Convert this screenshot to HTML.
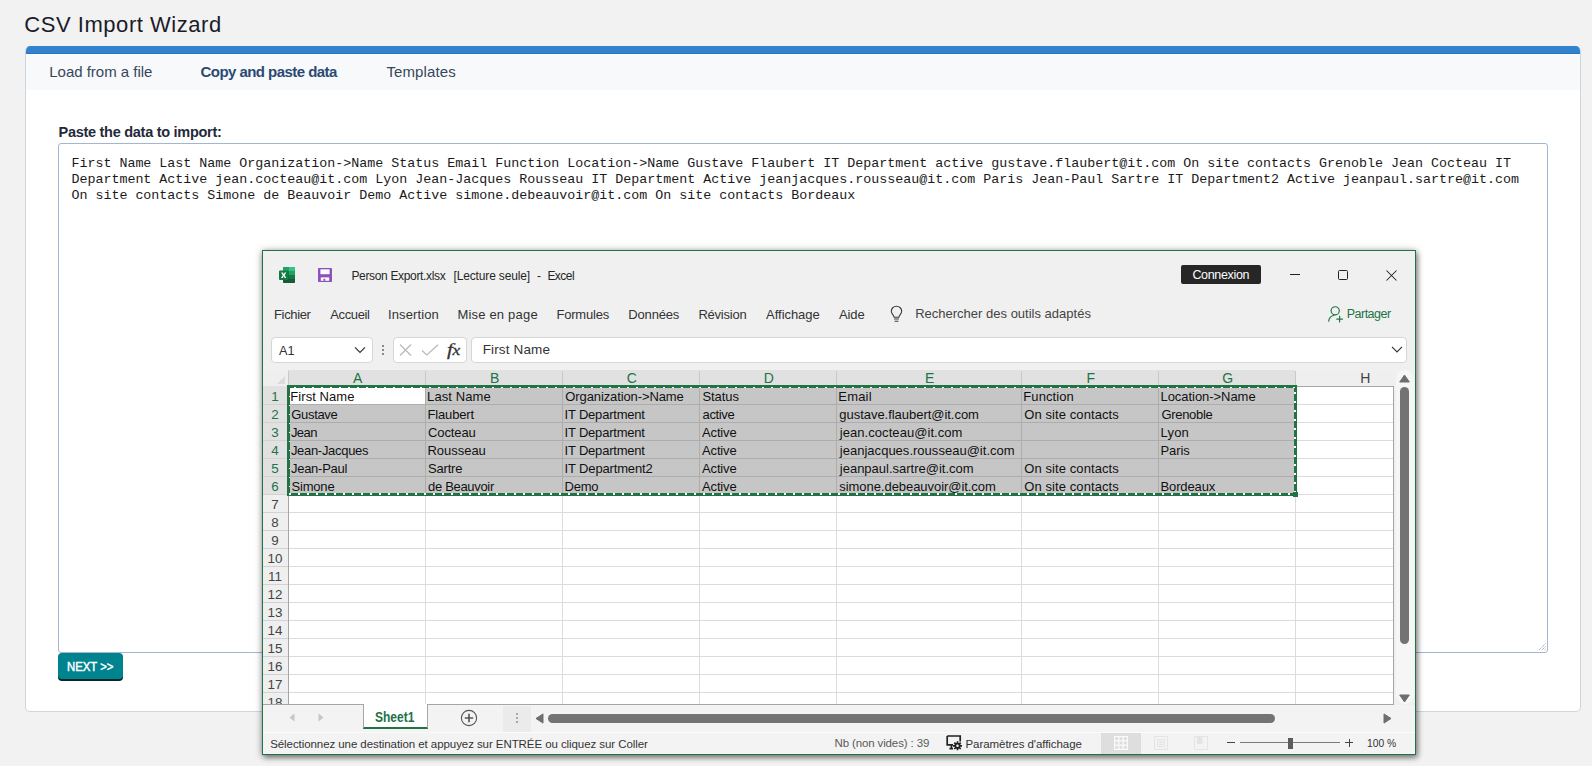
<!DOCTYPE html>
<html><head><meta charset="utf-8"><title>CSV Import Wizard</title>
<style>
*{box-sizing:border-box;margin:0;padding:0}
html,body{width:1592px;height:766px;overflow:hidden;background:#f2f2f2;font-family:"Liberation Sans",sans-serif;}
.a{position:absolute}
.tx{position:absolute;white-space:pre;z-index:5}
.bl{display:inline-block;width:0;height:0;vertical-align:baseline}
#panel{position:absolute;left:25px;top:46px;width:1556px;height:666px;background:#fff;border:1px solid #cdd5df;border-top:none;border-radius:5px;overflow:hidden}
#bluebar{position:absolute;left:0;top:0;width:100%;height:8px;background:#3282ce;border-bottom:1px solid #2475c6}
#tabs{position:absolute;left:0;top:9px;width:100%;height:35px;background:#f8f9fb}
#ta{position:absolute;left:58px;top:143px;width:1490px;height:510px;border:1px solid #a3b6d0;border-radius:3px;background:#fff}
#tatext{position:absolute;left:12.4px;top:12px;font-family:"Liberation Mono",monospace;font-size:13.333px;line-height:16px;color:#1a1a1a;white-space:pre}
#next{position:absolute;left:58px;top:653px;width:65px;height:26px;background:#00838f;border-radius:4px;box-shadow:0 2px 0 #01292d}
#xl{position:absolute;left:262px;top:250px;width:1154px;height:505px;background:#f0f0f0;border:1px solid #217346;box-shadow:0 1px 7px rgba(0,0,0,.42), 2px 3px 5px rgba(0,0,0,.3);z-index:2}
.box{position:absolute;background:#fff;border:1px solid #d6d6d6;border-radius:4px}
.ch{position:absolute;top:370px;height:16px;text-align:center;font-size:14px;line-height:17px;z-index:5}
.rh{position:absolute;left:262.5px;width:25px;height:18px;text-align:center;font-size:13.4px;line-height:21px;z-index:5}
</style></head><body>
<div id="panel"><div id="bluebar"></div><div id="tabs"></div></div>
<div id="ta"><div id="tatext">First Name Last Name Organization-&gt;Name Status Email Function Location-&gt;Name Gustave Flaubert IT Department active gustave.flaubert@it.com On site contacts Grenoble Jean Cocteau IT
Department Active jean.cocteau@it.com Lyon Jean-Jacques Rousseau IT Department Active jeanjacques.rousseau@it.com Paris Jean-Paul Sartre IT Department2 Active jeanpaul.sartre@it.com
On site contacts Simone de Beauvoir Demo Active simone.debeauvoir@it.com On site contacts Bordeaux</div>
<svg class="a" style="right:1px;bottom:1px" width="9" height="9" viewBox="0 0 9 9"><path d="M8.5 1.5 L1.5 8.5 M8.5 4.5 L4.5 8.5 M8.5 7 L7 8.5" stroke="#a0a0a0" stroke-width="1" stroke-dasharray="1.2 0.8" fill="none"/></svg>
</div>
<div id="next"></div>
<div id="xl"></div>

<svg class="a" style="left:279px;top:267px;z-index:4" width="16" height="16" viewBox="0 0 16 16">
<path d="M5 0 H15 a1 1 0 0 1 1 1 V15 a1 1 0 0 1 -1 1 H5 a1 1 0 0 1 -1 -1 V1 a1 1 0 0 1 1 -1 Z" fill="#21a366"/>
<rect x="10" y="0" width="6" height="4" fill="#33c481"/><rect x="4" y="0" width="6" height="4" fill="#21a366"/>
<rect x="4" y="4" width="6" height="4" fill="#107c41"/><rect x="10" y="4" width="6" height="4" fill="#21a366"/>
<rect x="10" y="8" width="6" height="4" fill="#107c41"/><rect x="4" y="8" width="6" height="4" fill="#185c37"/>
<path d="M4 12 H16 V15 a1 1 0 0 1 -1 1 H5 a1 1 0 0 1 -1 -1 Z" fill="#185c37"/>
<rect x="0" y="3.5" width="9.4" height="9.4" rx="0.9" fill="#107c41"/>
<path d="M2.1 5.6 H3.8 L4.75 7.35 L5.7 5.6 H7.3 L5.6 8.2 L7.4 10.9 H5.7 L4.7 9.1 L3.7 10.9 H2.0 L3.8 8.2 Z" fill="#fff"/>
</svg>
<svg class="a" style="left:318px;top:268px;z-index:4" width="14" height="14" viewBox="0 0 14 14">
<rect x="0" y="0" width="14" height="14" rx="0.8" fill="#8c52b9"/>
<rect x="2.4" y="1.3" width="9.2" height="4.9" fill="#fdfcfe"/>
<rect x="2.8" y="9.4" width="8.4" height="3.4" fill="#fdfcfe"/>
<rect x="5.4" y="10.8" width="1.9" height="2.0" fill="#8c52b9"/>
</svg>
<div class="a" style="left:1181px;top:265px;width:80px;height:19px;background:#262626;border-radius:2px;z-index:3;"></div>
<div class="a" style="left:1290px;top:274px;width:10px;height:1px;background:#222;z-index:3;"></div>
<div class="a" style="left:1338px;top:270px;width:10px;height:10px;border:1px solid #222;border-radius:1.5px;z-index:3;"></div>
<svg class="a" style="left:1386px;top:270px;z-index:4" width="11" height="11" viewBox="0 0 11 11"><path d="M0.5 0.5 L10.5 10.5 M10.5 0.5 L0.5 10.5" stroke="#222" stroke-width="1.05" fill="none"/></svg>
<svg class="a" style="left:890px;top:305px;z-index:4" width="13" height="18" viewBox="0 0 13 18"><path d="M6.5 1.3 C3.4 1.3 1.3 3.5 1.3 6.2 C1.3 8 2.3 9 3.3 10.3 C3.9 11.1 4.1 11.6 4.1 12.2 H8.9 C8.9 11.6 9.1 11.1 9.7 10.3 C10.7 9 11.7 8 11.7 6.2 C11.7 3.5 9.6 1.3 6.5 1.3 Z" fill="none" stroke="#3a3a3a" stroke-width="1.1"/><path d="M4.1 14 H8.9 M4.6 16.3 H8.4" stroke="#3a3a3a" stroke-width="1.1"/></svg>
<svg class="a" style="left:1327px;top:305px;z-index:4" width="17" height="18" viewBox="0 0 17 18"><circle cx="8.2" cy="5.8" r="4.1" fill="none" stroke="#217346" stroke-width="1.15"/><path d="M1.6 16.6 C2 12.6 4.6 10.5 7.6 10.2" fill="none" stroke="#217346" stroke-width="1.15"/><path d="M12.6 10.8 V17.4 M9.3 14.1 H15.9" stroke="#217346" stroke-width="1.15"/></svg>
<div class="box" style="left:271px;top:337px;width:102px;height:26px;z-index:3"></div>
<svg class="a" style="left:354px;top:346px;z-index:4" width="12" height="8" viewBox="0 0 12 8"><path d="M1 1.3 L6 6.3 L11 1.3" fill="none" stroke="#333" stroke-width="1.2"/></svg>
<div class="a" style="left:382px;top:345px;width:2px;height:2px;background:#8a8a8a;z-index:3;"></div>
<div class="a" style="left:382px;top:349px;width:2px;height:2px;background:#8a8a8a;z-index:3;"></div>
<div class="a" style="left:382px;top:353px;width:2px;height:2px;background:#8a8a8a;z-index:3;"></div>
<div class="box" style="left:393px;top:337px;width:74px;height:26px;z-index:3"></div>
<svg class="a" style="left:399px;top:344px;z-index:4" width="13" height="12" viewBox="0 0 13 12"><path d="M1 0.5 L12 11.5 M12 0.5 L1 11.5" stroke="#b8b8b8" stroke-width="1.15" fill="none"/></svg>
<svg class="a" style="left:421px;top:344px;z-index:4" width="18" height="12" viewBox="0 0 18 12"><path d="M1 6.5 L5.8 11 L17 0.8" stroke="#b8b8b8" stroke-width="1.15" fill="none"/></svg>
<div class="tx" style="left:446.5px;top:338px;font-family:'Liberation Serif',serif;font-style:italic;font-size:17.5px;line-height:22px;color:#333;-webkit-text-stroke:0.3px #333;letter-spacing:-0.2px;z-index:5;transform-origin:0 0;transform:scaleX(1.2)">f<span style="font-size:14.5px">x</span></div>
<div class="box" style="left:471px;top:337px;width:936px;height:26px;z-index:3"></div>
<svg class="a" style="left:1391px;top:346px;z-index:4" width="12" height="7" viewBox="0 0 12 7"><path d="M1 0.9 L6 5.9 L11 0.9" fill="none" stroke="#333" stroke-width="1.2"/></svg>
<div class="a" style="left:263px;top:370px;width:1130px;height:334px;background:#fff;z-index:3;"></div>
<div class="a" style="left:263px;top:370px;width:1131px;height:16px;background:#efefef;z-index:3;"></div>
<div class="a" style="left:263px;top:386px;width:25px;height:318px;background:#efefef;z-index:3;"></div>
<div class="a" style="left:288px;top:370px;width:1007px;height:16px;background:#e1e1e1;z-index:3;"></div>
<div class="a" style="left:263px;top:386px;width:25px;height:108px;background:#e1e1e1;z-index:3;"></div>
<svg class="a" style="left:277px;top:376px;z-index:4" width="8" height="8" viewBox="0 0 8 8"><path d="M8 0 V8 H0 Z" fill="#dcdcdc"/></svg>
<div class="a" style="left:1295px;top:386px;width:98px;height:1px;background:#a6a6a6;z-index:3;"></div>
<div class="a" style="left:288px;top:494px;width:1px;height:210px;background:#a6a6a6;z-index:3;"></div>
<div class="a" style="left:288px;top:386px;width:1007px;height:108px;background:#c6c6c6;z-index:3;"></div>
<div class="a" style="left:290px;top:388px;width:135px;height:16px;background:#fff;z-index:3;"></div>
<div class="a" style="left:289px;top:404px;width:1104px;height:1px;background:#dcdcdc;z-index:3;"></div>
<div class="a" style="left:263px;top:404px;width:25px;height:1px;background:#d2d2d2;z-index:3;"></div>
<div class="a" style="left:289px;top:404px;width:1006px;height:1px;background:#adadad;z-index:3;"></div>
<div class="a" style="left:289px;top:422px;width:1104px;height:1px;background:#dcdcdc;z-index:3;"></div>
<div class="a" style="left:263px;top:422px;width:25px;height:1px;background:#d2d2d2;z-index:3;"></div>
<div class="a" style="left:289px;top:422px;width:1006px;height:1px;background:#adadad;z-index:3;"></div>
<div class="a" style="left:289px;top:440px;width:1104px;height:1px;background:#dcdcdc;z-index:3;"></div>
<div class="a" style="left:263px;top:440px;width:25px;height:1px;background:#d2d2d2;z-index:3;"></div>
<div class="a" style="left:289px;top:440px;width:1006px;height:1px;background:#adadad;z-index:3;"></div>
<div class="a" style="left:289px;top:458px;width:1104px;height:1px;background:#dcdcdc;z-index:3;"></div>
<div class="a" style="left:263px;top:458px;width:25px;height:1px;background:#d2d2d2;z-index:3;"></div>
<div class="a" style="left:289px;top:458px;width:1006px;height:1px;background:#adadad;z-index:3;"></div>
<div class="a" style="left:289px;top:476px;width:1104px;height:1px;background:#dcdcdc;z-index:3;"></div>
<div class="a" style="left:263px;top:476px;width:25px;height:1px;background:#d2d2d2;z-index:3;"></div>
<div class="a" style="left:289px;top:476px;width:1006px;height:1px;background:#adadad;z-index:3;"></div>
<div class="a" style="left:289px;top:494px;width:1104px;height:1px;background:#dcdcdc;z-index:3;"></div>
<div class="a" style="left:263px;top:494px;width:25px;height:1px;background:#d2d2d2;z-index:3;"></div>
<div class="a" style="left:289px;top:512px;width:1104px;height:1px;background:#dcdcdc;z-index:3;"></div>
<div class="a" style="left:263px;top:512px;width:25px;height:1px;background:#d2d2d2;z-index:3;"></div>
<div class="a" style="left:289px;top:530px;width:1104px;height:1px;background:#dcdcdc;z-index:3;"></div>
<div class="a" style="left:263px;top:530px;width:25px;height:1px;background:#d2d2d2;z-index:3;"></div>
<div class="a" style="left:289px;top:548px;width:1104px;height:1px;background:#dcdcdc;z-index:3;"></div>
<div class="a" style="left:263px;top:548px;width:25px;height:1px;background:#d2d2d2;z-index:3;"></div>
<div class="a" style="left:289px;top:566px;width:1104px;height:1px;background:#dcdcdc;z-index:3;"></div>
<div class="a" style="left:263px;top:566px;width:25px;height:1px;background:#d2d2d2;z-index:3;"></div>
<div class="a" style="left:289px;top:584px;width:1104px;height:1px;background:#dcdcdc;z-index:3;"></div>
<div class="a" style="left:263px;top:584px;width:25px;height:1px;background:#d2d2d2;z-index:3;"></div>
<div class="a" style="left:289px;top:602px;width:1104px;height:1px;background:#dcdcdc;z-index:3;"></div>
<div class="a" style="left:263px;top:602px;width:25px;height:1px;background:#d2d2d2;z-index:3;"></div>
<div class="a" style="left:289px;top:620px;width:1104px;height:1px;background:#dcdcdc;z-index:3;"></div>
<div class="a" style="left:263px;top:620px;width:25px;height:1px;background:#d2d2d2;z-index:3;"></div>
<div class="a" style="left:289px;top:638px;width:1104px;height:1px;background:#dcdcdc;z-index:3;"></div>
<div class="a" style="left:263px;top:638px;width:25px;height:1px;background:#d2d2d2;z-index:3;"></div>
<div class="a" style="left:289px;top:656px;width:1104px;height:1px;background:#dcdcdc;z-index:3;"></div>
<div class="a" style="left:263px;top:656px;width:25px;height:1px;background:#d2d2d2;z-index:3;"></div>
<div class="a" style="left:289px;top:674px;width:1104px;height:1px;background:#dcdcdc;z-index:3;"></div>
<div class="a" style="left:263px;top:674px;width:25px;height:1px;background:#d2d2d2;z-index:3;"></div>
<div class="a" style="left:289px;top:692px;width:1104px;height:1px;background:#dcdcdc;z-index:3;"></div>
<div class="a" style="left:263px;top:692px;width:25px;height:1px;background:#d2d2d2;z-index:3;"></div>
<div class="a" style="left:425px;top:386px;width:1px;height:318px;background:#dcdcdc;z-index:3;"></div>
<div class="a" style="left:425px;top:386px;width:1px;height:108px;background:#adadad;z-index:3;"></div>
<div class="a" style="left:425px;top:371px;width:1px;height:15px;background:#c9c9c9;z-index:3;"></div>
<div class="a" style="left:562px;top:386px;width:1px;height:318px;background:#dcdcdc;z-index:3;"></div>
<div class="a" style="left:562px;top:386px;width:1px;height:108px;background:#adadad;z-index:3;"></div>
<div class="a" style="left:562px;top:371px;width:1px;height:15px;background:#c9c9c9;z-index:3;"></div>
<div class="a" style="left:699px;top:386px;width:1px;height:318px;background:#dcdcdc;z-index:3;"></div>
<div class="a" style="left:699px;top:386px;width:1px;height:108px;background:#adadad;z-index:3;"></div>
<div class="a" style="left:699px;top:371px;width:1px;height:15px;background:#c9c9c9;z-index:3;"></div>
<div class="a" style="left:836px;top:386px;width:1px;height:318px;background:#dcdcdc;z-index:3;"></div>
<div class="a" style="left:836px;top:386px;width:1px;height:108px;background:#adadad;z-index:3;"></div>
<div class="a" style="left:836px;top:371px;width:1px;height:15px;background:#c9c9c9;z-index:3;"></div>
<div class="a" style="left:1021px;top:386px;width:1px;height:318px;background:#dcdcdc;z-index:3;"></div>
<div class="a" style="left:1021px;top:386px;width:1px;height:108px;background:#adadad;z-index:3;"></div>
<div class="a" style="left:1021px;top:371px;width:1px;height:15px;background:#c9c9c9;z-index:3;"></div>
<div class="a" style="left:1158px;top:386px;width:1px;height:318px;background:#dcdcdc;z-index:3;"></div>
<div class="a" style="left:1158px;top:386px;width:1px;height:108px;background:#adadad;z-index:3;"></div>
<div class="a" style="left:1158px;top:371px;width:1px;height:15px;background:#c9c9c9;z-index:3;"></div>
<div class="a" style="left:1295px;top:386px;width:1px;height:318px;background:#dcdcdc;z-index:3;"></div>
<div class="a" style="left:1295px;top:371px;width:1px;height:15px;background:#c9c9c9;z-index:3;"></div>
<div class="a" style="left:288px;top:371px;width:1px;height:15px;background:#c9c9c9;z-index:3;"></div>
<div class="ch" style="left:289.2px;width:137px;color:#217346">A</div>
<div class="ch" style="left:426.2px;width:137px;color:#217346">B</div>
<div class="ch" style="left:563.2px;width:137px;color:#217346">C</div>
<div class="ch" style="left:700.2px;width:137px;color:#217346">D</div>
<div class="ch" style="left:837.2px;width:185px;color:#217346">E</div>
<div class="ch" style="left:1022.2px;width:137px;color:#217346">F</div>
<div class="ch" style="left:1159.2px;width:137px;color:#217346">G</div>
<div class="ch" style="left:1296.2px;width:138px;color:#444">H</div>
<div class="rh" style="top:386px;color:#217346">1</div>
<div class="rh" style="top:404px;color:#217346">2</div>
<div class="rh" style="top:422px;color:#217346">3</div>
<div class="rh" style="top:440px;color:#217346">4</div>
<div class="rh" style="top:458px;color:#217346">5</div>
<div class="rh" style="top:476px;color:#217346">6</div>
<div class="rh" style="top:494px;color:#444">7</div>
<div class="rh" style="top:512px;color:#444">8</div>
<div class="rh" style="top:530px;color:#444">9</div>
<div class="rh" style="top:548px;color:#444">10</div>
<div class="rh" style="top:566px;color:#444">11</div>
<div class="rh" style="top:584px;color:#444">12</div>
<div class="rh" style="top:602px;color:#444">13</div>
<div class="rh" style="top:620px;color:#444">14</div>
<div class="rh" style="top:638px;color:#444">15</div>
<div class="rh" style="top:656px;color:#444">16</div>
<div class="rh" style="top:674px;color:#444">17</div>
<div class="rh" style="top:692px;color:#444;height:12px;overflow:hidden">18</div>
<div class="a" style="left:287px;top:385px;width:1010px;height:111px;border:2px solid #217346;z-index:6"></div>
<div class="a" style="left:289px;top:387px;width:1006px;height:1px;background:repeating-linear-gradient(90deg,#217346 0 5px,#fff 5px 7px,#217346 7px 9px);z-index:6"></div>
<div class="a" style="left:289px;top:493px;width:1006px;height:2px;background:repeating-linear-gradient(90deg,#fff 0 2px,#217346 2px 9px);z-index:6"></div>
<div class="a" style="left:289px;top:388px;width:1px;height:105px;background:repeating-linear-gradient(180deg,#217346 0 8px,#fff 8px 9px);z-index:6"></div>
<div class="a" style="left:1294px;top:388px;width:2px;height:105px;background:repeating-linear-gradient(180deg,#217346 0 4px,#fff 4px 6px,#217346 6px 9px);z-index:6"></div>
<div class="a" style="left:1293px;top:492px;width:5px;height:5px;background:#217346;z-index:7"></div>
<div class="a" style="left:1396px;top:370px;width:18px;height:334px;background:#f6f6f6;border-radius:9px;z-index:3;"></div>
<div class="a" style="left:1393px;top:386px;width:1px;height:319px;background:#a6a6a6;z-index:3;"></div>
<div class="a" style="left:1400px;top:387px;width:9px;height:257px;background:#737373;border-radius:4.5px;z-index:4"></div>
<svg class="a" style="left:1399px;top:374px;z-index:4" width="11" height="9" viewBox="0 0 11 9"><path d="M5.5 1 L10.3 8 H0.7 Z" fill="#6e6e6e" stroke="#6e6e6e" stroke-width="1" stroke-linejoin="round"/></svg>
<svg class="a" style="left:1399px;top:694px;z-index:4" width="11" height="9" viewBox="0 0 11 9"><path d="M5.5 8 L10.3 1 H0.7 Z" fill="#6e6e6e" stroke="#6e6e6e" stroke-width="1" stroke-linejoin="round"/></svg>
<div class="a" style="left:263px;top:704px;width:1131px;height:1px;background:#a6a6a6;z-index:3;"></div>
<div class="a" style="left:263px;top:705px;width:1152px;height:27px;background:#f3f3f3;z-index:3;"></div>
<div class="a" style="left:263px;top:732px;width:1152px;height:1px;background:#fbfbfb;z-index:3;"></div>
<div class="a" style="left:263px;top:733px;width:1152px;height:21px;background:#f3f3f3;z-index:3;"></div>
<svg class="a" style="left:289px;top:713px;z-index:4" width="6" height="9" viewBox="0 0 6 9"><path d="M5.5 0.5 V8.5 L0.5 4.5 Z" fill="#c6c6c6"/></svg>
<svg class="a" style="left:318px;top:713px;z-index:4" width="6" height="9" viewBox="0 0 6 9"><path d="M0.5 0.5 V8.5 L5.5 4.5 Z" fill="#c6c6c6"/></svg>
<div class="a" style="left:363px;top:704px;width:65px;height:25px;background:#fff;border-left:1px solid #a6a6a6;border-right:1px solid #a6a6a6;border-bottom:2px solid #217346;z-index:4"></div>
<svg class="a" style="left:460px;top:709px;z-index:4" width="18" height="18" viewBox="0 0 18 18"><circle cx="9" cy="9" r="7.6" fill="none" stroke="#555" stroke-width="1.1"/><path d="M9 4.8 V13.2 M4.8 9 H13.2" stroke="#555" stroke-width="1.6"/></svg>
<div class="a" style="left:503px;top:706px;width:28px;height:26px;background:#ebebeb;z-index:3;"></div>
<div class="a" style="left:516px;top:713px;width:2px;height:2px;background:#a8a8a8;z-index:4"></div>
<div class="a" style="left:516px;top:717px;width:2px;height:2px;background:#a8a8a8;z-index:4"></div>
<div class="a" style="left:516px;top:721px;width:2px;height:2px;background:#a8a8a8;z-index:4"></div>
<svg class="a" style="left:535px;top:713px;z-index:4" width="9" height="11" viewBox="0 0 9 11"><path d="M1 5.5 L8 0.9 V10.1 Z" fill="#6e6e6e" stroke="#6e6e6e" stroke-width="1" stroke-linejoin="round"/></svg>
<div class="a" style="left:548px;top:714px;width:727px;height:9px;background:#737373;border-radius:4.5px;z-index:4"></div>
<svg class="a" style="left:1383px;top:713px;z-index:4" width="9" height="11" viewBox="0 0 9 11"><path d="M8 5.5 L1 0.9 V10.1 Z" fill="#6e6e6e" stroke="#6e6e6e" stroke-width="1" stroke-linejoin="round"/></svg>
<svg class="a" style="left:946px;top:735px;z-index:4" width="17" height="16" viewBox="0 0 17 16"><path d="M1.2 1 H14.2 V6.5 M1.2 1 V9.8 H7 M3.4 13.6 H7 M5.4 9.8 V13.6" fill="none" stroke="#222" stroke-width="1.7"/><path d="M11.5 6.3 V15.3 M7 10.8 H16 M8.3 7.6 L14.7 14 M14.7 7.6 L8.3 14" stroke="#222" stroke-width="1.7"/><circle cx="11.5" cy="10.8" r="3.1" fill="#222"/><circle cx="11.5" cy="10.8" r="1.25" fill="#f3f3f3"/></svg>
<div class="a" style="left:1101px;top:733px;width:40px;height:21px;background:#dedede;z-index:3;"></div>
<svg class="a" style="left:1114px;top:736px;z-index:4" width="14" height="14" viewBox="0 0 14 14"><rect x="0" y="0" width="14" height="14" fill="#fafafa"/><g fill="#dedede"><rect x="1.2" y="1.2" width="3" height="3"/><rect x="5.5" y="1.2" width="3" height="3"/><rect x="9.8" y="1.2" width="3" height="3"/><rect x="1.2" y="5.5" width="3" height="3"/><rect x="5.5" y="5.5" width="3" height="3"/><rect x="9.8" y="5.5" width="3" height="3"/><rect x="1.2" y="9.8" width="3" height="3"/><rect x="5.5" y="9.8" width="3" height="3"/><rect x="9.8" y="9.8" width="3" height="3"/></g></svg>
<svg class="a" style="left:1154px;top:736px;z-index:4" width="14" height="14" viewBox="0 0 14 14"><path d="M0.5 0.5 H13.5 V13.5 H0.5 Z M3.5 3.5 H10.5 V10.5 H3.5 Z M5 5.5 H9 M5 7 H9 M5 8.5 H9" fill="none" stroke="#e4e4e4" stroke-width="1"/></svg>
<svg class="a" style="left:1194px;top:736px;z-index:4" width="14" height="14" viewBox="0 0 14 14"><path d="M0.5 0.5 H13.5 V13.5 H0.5 Z" fill="none" stroke="#e4e4e4" stroke-width="1"/><rect x="3" y="1" width="5.5" height="7" fill="#e4e4e4"/></svg>
<div class="a" style="left:1227px;top:742px;width:8px;height:1px;background:#444;z-index:4"></div>
<div class="a" style="left:1240px;top:742px;width:100px;height:1px;background:#7a7a7a;z-index:4"></div>
<div class="a" style="left:1288px;top:738px;width:5px;height:11px;background:#5c5c5c;z-index:4"></div>
<div class="a" style="left:1345px;top:742px;width:8px;height:1px;background:#444;z-index:4"></div>
<div class="a" style="left:1348.5px;top:739px;width:1px;height:8px;background:#444;z-index:4"></div>
<div class="tx" style="left:24.30px;top:11.80px;font-size:22px;line-height:26px;letter-spacing:0.542px;color:#1b1b2a;">CSV Import Wizard</div>
<div class="tx" style="left:49.30px;top:61.80px;font-size:15px;line-height:19px;letter-spacing:-0.023px;color:#36475c;">Load from a file</div>
<div class="tx" style="left:200.50px;top:61.80px;font-size:15px;line-height:19px;letter-spacing:-0.547px;color:#2b4a73;font-weight:bold;">Copy and paste data</div>
<div class="tx" style="left:386.40px;top:61.80px;font-size:15px;line-height:19px;letter-spacing:0.129px;color:#36475c;">Templates</div>
<div class="tx" style="left:58.50px;top:123.00px;font-size:14.5px;line-height:18px;letter-spacing:-0.278px;color:#1f2a3a;font-weight:bold;">Paste the data to import:</div>
<div class="tx" style="left:67.31px;top:658.70px;font-size:12.7px;line-height:17px;transform-origin:0 0;transform:scaleX(0.8942);color:#fff;-webkit-text-stroke:0.45px #fff;">NEXT &gt;&gt;</div>
<div class="tx" style="left:351.40px;top:267.80px;font-size:12px;line-height:16px;letter-spacing:-0.332px;color:#262626;">Person Export.xlsx</div>
<div class="tx" style="left:453.50px;top:267.80px;font-size:12px;line-height:16px;letter-spacing:-0.149px;color:#262626;">[Lecture seule]</div>
<div class="tx" style="left:537.10px;top:267.80px;font-size:12px;line-height:16px;letter-spacing:0.000px;color:#262626;">-</div>
<div class="tx" style="left:547.40px;top:267.80px;font-size:12px;line-height:16px;letter-spacing:-0.544px;color:#262626;">Excel</div>
<div class="tx" style="left:1192.40px;top:267.30px;font-size:12.5px;line-height:16px;letter-spacing:-0.339px;color:#fff;">Connexion</div>
<div class="tx" style="left:274.00px;top:305.80px;font-size:13px;line-height:17px;letter-spacing:-0.346px;color:#333;">Fichier</div>
<div class="tx" style="left:330.30px;top:305.80px;font-size:13px;line-height:17px;letter-spacing:-0.387px;color:#333;">Accueil</div>
<div class="tx" style="left:388.00px;top:305.80px;font-size:13px;line-height:17px;letter-spacing:0.109px;color:#333;">Insertion</div>
<div class="tx" style="left:457.40px;top:305.80px;font-size:13px;line-height:17px;letter-spacing:0.198px;color:#333;">Mise en page</div>
<div class="tx" style="left:556.40px;top:305.80px;font-size:13px;line-height:17px;letter-spacing:-0.197px;color:#333;">Formules</div>
<div class="tx" style="left:628.30px;top:305.80px;font-size:13px;line-height:17px;letter-spacing:-0.173px;color:#333;">Données</div>
<div class="tx" style="left:698.40px;top:305.80px;font-size:13px;line-height:17px;letter-spacing:-0.218px;color:#333;">Révision</div>
<div class="tx" style="left:766.10px;top:305.80px;font-size:13px;line-height:17px;letter-spacing:-0.042px;color:#333;">Affichage</div>
<div class="tx" style="left:839.00px;top:305.80px;font-size:13px;line-height:17px;letter-spacing:-0.096px;color:#333;">Aide</div>
<div class="tx" style="left:915.20px;top:304.80px;font-size:13px;line-height:17px;letter-spacing:0.004px;color:#444;">Rechercher des outils adaptés</div>
<div class="tx" style="left:1346.70px;top:305.80px;font-size:12.5px;line-height:16px;letter-spacing:-0.497px;color:#217346;">Partager</div>
<div class="tx" style="left:278.50px;top:341.60px;font-size:13.5px;line-height:18px;transform-origin:0 0;transform:scaleX(0.9372);color:#333;">A1</div>
<div class="tx" style="left:482.70px;top:340.80px;font-size:13.5px;line-height:18px;letter-spacing:0.145px;color:#333;">First Name</div>
<div class="tx" style="left:270.20px;top:735.60px;font-size:11.5px;line-height:16px;letter-spacing:-0.074px;color:#333;">Sélectionnez une destination et appuyez sur ENTRÉE ou cliquez sur Coller</div>
<div class="tx" style="left:834.50px;top:735.20px;font-size:11.5px;line-height:16px;letter-spacing:-0.131px;color:#5a5a5a;">Nb (non vides) : 39</div>
<div class="tx" style="left:965.50px;top:735.60px;font-size:11.5px;line-height:16px;letter-spacing:-0.062px;color:#333;">Paramètres d'affichage</div>
<div class="tx" style="left:1366.80px;top:735.20px;font-size:11.5px;line-height:16px;transform-origin:0 0;transform:scaleX(0.8986);color:#333;">100 %</div>
<div class="tx" style="left:375.20px;top:708.00px;font-size:14px;line-height:18px;transform-origin:0 0;transform:scaleX(0.8586);color:#217346;font-weight:bold;">Sheet1</div>
<div class="tx" style="left:290.30px;top:387.60px;font-size:13px;line-height:17px;letter-spacing:0.063px;color:#111;">First Name</div>
<div class="tx" style="left:427.10px;top:387.60px;font-size:13px;line-height:17px;letter-spacing:0.084px;color:#111;">Last Name</div>
<div class="tx" style="left:565.30px;top:387.60px;font-size:13px;line-height:17px;letter-spacing:-0.110px;color:#111;">Organization-&gt;Name</div>
<div class="tx" style="left:702.50px;top:387.60px;font-size:13px;line-height:17px;letter-spacing:-0.091px;color:#111;">Status</div>
<div class="tx" style="left:838.30px;top:387.60px;font-size:13px;line-height:17px;letter-spacing:0.195px;color:#111;">Email</div>
<div class="tx" style="left:1023.30px;top:387.60px;font-size:13px;line-height:17px;letter-spacing:0.081px;color:#111;">Function</div>
<div class="tx" style="left:1160.50px;top:387.60px;font-size:13px;line-height:17px;letter-spacing:-0.048px;color:#111;">Location-&gt;Name</div>
<div class="tx" style="left:291.30px;top:405.60px;font-size:13px;line-height:17px;letter-spacing:-0.331px;color:#111;">Gustave</div>
<div class="tx" style="left:427.50px;top:405.60px;font-size:13px;line-height:17px;letter-spacing:-0.154px;color:#111;">Flaubert</div>
<div class="tx" style="left:564.60px;top:405.60px;font-size:13px;line-height:17px;letter-spacing:-0.206px;color:#111;">IT Department</div>
<div class="tx" style="left:702.50px;top:405.60px;font-size:13px;line-height:17px;letter-spacing:-0.346px;color:#111;">active</div>
<div class="tx" style="left:839.30px;top:405.60px;font-size:13px;line-height:17px;letter-spacing:-0.034px;color:#111;">gustave.flaubert@it.com</div>
<div class="tx" style="left:1024.30px;top:405.60px;font-size:13px;line-height:17px;letter-spacing:0.086px;color:#111;">On site contacts</div>
<div class="tx" style="left:1161.50px;top:405.60px;font-size:13px;line-height:17px;letter-spacing:-0.321px;color:#111;">Grenoble</div>
<div class="tx" style="left:290.90px;top:423.60px;font-size:13px;line-height:17px;letter-spacing:-0.520px;color:#111;">Jean</div>
<div class="tx" style="left:428.10px;top:423.60px;font-size:13px;line-height:17px;letter-spacing:-0.115px;color:#111;">Cocteau</div>
<div class="tx" style="left:564.60px;top:423.60px;font-size:13px;line-height:17px;letter-spacing:-0.206px;color:#111;">IT Department</div>
<div class="tx" style="left:702.10px;top:423.60px;font-size:13px;line-height:17px;letter-spacing:-0.174px;color:#111;">Active</div>
<div class="tx" style="left:839.80px;top:423.60px;font-size:13px;line-height:17px;letter-spacing:0.058px;color:#111;">jean.cocteau@it.com</div>
<div class="tx" style="left:1160.50px;top:423.60px;font-size:13px;line-height:17px;letter-spacing:0.207px;color:#111;">Lyon</div>
<div class="tx" style="left:290.90px;top:441.60px;font-size:13px;line-height:17px;letter-spacing:-0.304px;color:#111;">Jean-Jacques</div>
<div class="tx" style="left:427.50px;top:441.60px;font-size:13px;line-height:17px;letter-spacing:-0.030px;color:#111;">Rousseau</div>
<div class="tx" style="left:564.60px;top:441.60px;font-size:13px;line-height:17px;letter-spacing:-0.206px;color:#111;">IT Department</div>
<div class="tx" style="left:702.10px;top:441.60px;font-size:13px;line-height:17px;letter-spacing:-0.174px;color:#111;">Active</div>
<div class="tx" style="left:839.80px;top:441.60px;font-size:13px;line-height:17px;letter-spacing:0.019px;color:#111;">jeanjacques.rousseau@it.com</div>
<div class="tx" style="left:1160.50px;top:441.60px;font-size:13px;line-height:17px;letter-spacing:-0.080px;color:#111;">Paris</div>
<div class="tx" style="left:290.90px;top:459.60px;font-size:13px;line-height:17px;letter-spacing:-0.244px;color:#111;">Jean-Paul</div>
<div class="tx" style="left:428.10px;top:459.60px;font-size:13px;line-height:17px;letter-spacing:-0.214px;color:#111;">Sartre</div>
<div class="tx" style="left:564.60px;top:459.60px;font-size:13px;line-height:17px;letter-spacing:-0.153px;color:#111;">IT Department2</div>
<div class="tx" style="left:702.10px;top:459.60px;font-size:13px;line-height:17px;letter-spacing:-0.174px;color:#111;">Active</div>
<div class="tx" style="left:839.80px;top:459.60px;font-size:13px;line-height:17px;letter-spacing:-0.002px;color:#111;">jeanpaul.sartre@it.com</div>
<div class="tx" style="left:1024.30px;top:459.60px;font-size:13px;line-height:17px;letter-spacing:0.086px;color:#111;">On site contacts</div>
<div class="tx" style="left:291.60px;top:477.60px;font-size:13px;line-height:17px;letter-spacing:-0.210px;color:#111;">Simone</div>
<div class="tx" style="left:428.10px;top:477.60px;font-size:13px;line-height:17px;letter-spacing:-0.325px;color:#111;">de Beauvoir</div>
<div class="tx" style="left:564.60px;top:477.60px;font-size:13px;line-height:17px;letter-spacing:-0.249px;color:#111;">Demo</div>
<div class="tx" style="left:702.10px;top:477.60px;font-size:13px;line-height:17px;letter-spacing:-0.174px;color:#111;">Active</div>
<div class="tx" style="left:839.30px;top:477.60px;font-size:13px;line-height:17px;letter-spacing:-0.052px;color:#111;">simone.debeauvoir@it.com</div>
<div class="tx" style="left:1024.30px;top:477.60px;font-size:13px;line-height:17px;letter-spacing:0.086px;color:#111;">On site contacts</div>
<div class="tx" style="left:1160.50px;top:477.60px;font-size:13px;line-height:17px;letter-spacing:-0.121px;color:#111;">Bordeaux</div>
</body></html>
